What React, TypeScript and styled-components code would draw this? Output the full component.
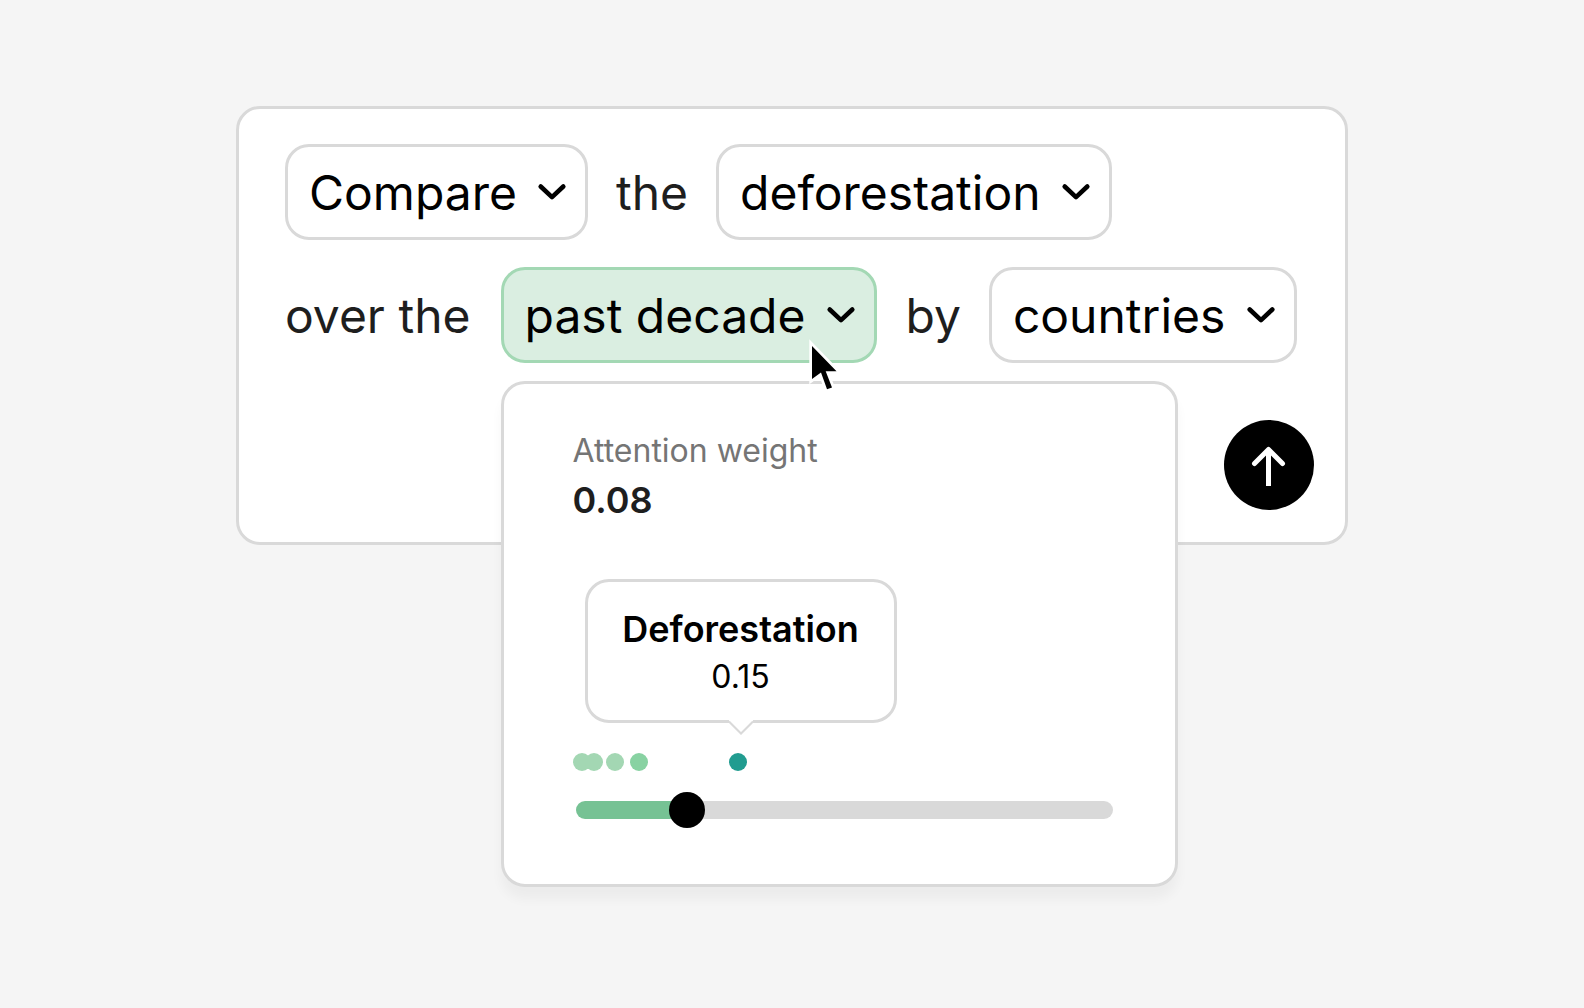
import React, { useId, useState } from 'react';
import styled, { createGlobalStyle, css } from 'styled-components';

const colors = {
  page: '#f5f5f5',
  surface: '#ffffff',
  line: '#d9d9d9',
  ink: '#000000',
  text: '#1e1e1e',
  muted: '#757575',
  highlight: '#daeee1',
  highlightLine: '#a3d8b4',
  fill: '#76c294',
};

const GlobalStyle = createGlobalStyle`
  * { box-sizing: border-box; }
  body {
    margin: 0;
    background: ${colors.page};
    color: ${colors.text};
    font-family: Inter, "Liberation Sans", sans-serif;
  }
`;

const Page = styled.main`
  min-height: 100vh;
  padding: 106px 24px;
  display: flex;
  justify-content: center;
  align-items: flex-start;
`;

const PromptCard = styled.form`
  width: 100%;
  max-width: 1112px;
  padding: 35px 31px 32px 46px;
  border: 3px solid ${colors.line};
  border-radius: 24px;
  background: ${colors.surface};
  display: flex;
  flex-direction: column;
`;

const Sentence = styled.div`
  display: flex;
  flex-direction: column;
  gap: 27px;
  font-size: 48px;
  line-height: 60px;
`;

const Line = styled.div`
  display: flex;
  align-items: center;
  gap: 28px;
  white-space: nowrap;
`;

const LeadLine = styled(Line)`
  gap: 30px;
`;

const Words = styled.span`
  padding-top: 2px;
`;

const Actions = styled.div`
  display: flex;
  justify-content: flex-end;
  margin-top: 57px;
`;

const chip = css`
  height: 96px;
  border: 3px solid ${colors.line};
  border-radius: 24px;
  background: ${colors.surface};
  color: ${colors.ink};
  font: inherit;
  cursor: pointer;
`;

const SelectBox = styled.label`
  ${chip}
  display: grid;
  grid-template-columns: auto;
  align-items: center;

  > * { grid-area: 1 / 1; }
  > svg {
    justify-self: end;
    margin-right: 15px;
    pointer-events: none;
  }
`;

const Select = styled.select`
  appearance: none;
  height: 90px;
  margin: 0;
  padding: 2px 68px 0 21px;
  border: 0;
  border-radius: 21px;
  background: transparent;
  color: inherit;
  font: inherit;
  cursor: pointer;
`;

const PopoverAnchor = styled.div`
  position: relative;
`;

const PopoverButton = styled.button`
  ${chip}
  display: flex;
  align-items: center;
  gap: 18px;
  padding: 0 15px 0 21px;
  border-color: ${colors.highlightLine};
  background: ${colors.highlight};
`;

const SubmitButton = styled.button`
  width: 90px;
  height: 90px;
  padding: 0;
  border: 0;
  border-radius: 50%;
  background: ${colors.ink};
  display: grid;
  place-items: center;
  cursor: pointer;
`;

const Pointer = styled.svg`
  position: absolute;
  z-index: 2;
  left: 307px;
  top: 69px;
  pointer-events: none;
`;

const Popover = styled.section`
  position: absolute;
  z-index: 1;
  top: calc(100% + 18px);
  left: 0;
  width: 677px;
  padding: 43px 60px 56px 69px;
  border: 3px solid ${colors.line};
  border-radius: 24px;
  background: ${colors.surface};
  box-shadow: 0 12px 12px rgba(0, 0, 0, 0.04);
  color: ${colors.text};
`;

const WeightLabel = styled.label`
  display: block;
  font-size: 32px;
  line-height: 48px;
  color: ${colors.muted};
`;

const WeightValue = styled.output`
  display: block;
  font-size: 36px;
  line-height: 50px;
  font-weight: 600;
`;

const Plot = styled.div`
  position: relative;
  height: 18px;
  margin: 228px 0 21px;
`;

const Dot = styled.span<{ $color: string }>`
  position: absolute;
  top: 0;
  width: 18px;
  height: 18px;
  border-radius: 50%;
  background: ${(p) => p.$color};
`;

const Tooltip = styled.div`
  position: absolute;
  left: 12px;
  bottom: 48px;
  width: 312px;
  height: 144px;
  border: 3px solid ${colors.line};
  border-radius: 24px;
  background: ${colors.surface};
  color: ${colors.ink};
  text-align: center;
  padding-top: 23px;

  > svg {
    position: absolute;
    left: 141px;
    top: 138px;
  }
`;

const TooltipName = styled.div`
  font-size: 36px;
  line-height: 48px;
  font-weight: 600;
`;

const TooltipValue = styled.div`
  font-size: 32px;
  line-height: 48px;
`;

const Slider = styled.input`
  appearance: none;
  display: block;
  width: calc(100% - 5px);
  height: 36px;
  margin: 0 2px 0 3px;
  background: transparent;
  cursor: pointer;

  &::-webkit-slider-runnable-track {
    height: 18px;
    border-radius: 9px;
    background: linear-gradient(
      to right,
      ${colors.fill} var(--filled),
      ${colors.line} var(--filled)
    );
  }
  &::-webkit-slider-thumb {
    appearance: none;
    width: 36px;
    height: 36px;
    margin-top: -9px;
    border-radius: 50%;
    background: ${colors.ink};
  }
`;

const MAX_WEIGHT = 0.431;

const points = [
  { at: 0, color: '#a3d7b3' },
  { at: 12, color: '#a3d7b3' },
  { at: 33, color: '#a3d7b3' },
  { at: 57, color: '#88d2a2' },
  { at: 156, color: '#219c90' },
];

function Chevron() {
  return (
    <svg width="36" height="36" viewBox="0 0 36 36" fill="none" aria-hidden="true">
      <path d="M6.7 12.5 18 23.1 29.3 12.5" stroke="#000" strokeWidth="4.6" strokeLinecap="round" strokeLinejoin="round" />
    </svg>
  );
}

function Choice({ name, value }: { name: string; value: string }) {
  return (
    <SelectBox>
      <Select aria-label={name} defaultValue={value}>
        <option>{value}</option>
      </Select>
      <Chevron />
    </SelectBox>
  );
}

function WeightPopover() {
  const id = useId();
  const [weight, setWeight] = useState(0.08);
  const ratio = weight / MAX_WEIGHT;
  const filled = `calc(18px + (100% - 36px) * ${ratio})`;

  return (
    <Popover>
      <WeightLabel htmlFor={id}>Attention weight</WeightLabel>
      <WeightValue htmlFor={id}>{weight.toFixed(2)}</WeightValue>
      <Plot>
        {points.map((p) => (
          <Dot key={p.at} $color={p.color} style={{ left: p.at }} />
        ))}
        <Tooltip role="tooltip">
          <TooltipName>Deforestation</TooltipName>
          <TooltipValue>0.15</TooltipValue>
          <svg width="24" height="15" viewBox="0 0 24 15" aria-hidden="true">
            <path d="M0 0H24V2L12 14 0 2Z" fill="#fff" />
            <path d="M0 1.5 12 13.5 24 1.5" fill="none" stroke="#d9d9d9" strokeWidth="2" />
          </svg>
        </Tooltip>
      </Plot>
      <Slider
        id={id}
        type="range"
        min={0}
        max={MAX_WEIGHT}
        step={0.001}
        value={weight}
        onChange={(e) => setWeight(Number(e.target.value))}
        style={{ '--filled': filled } as React.CSSProperties}
      />
    </Popover>
  );
}

export default function App() {
  const [open, setOpen] = useState(true);

  return (
    <>
      <GlobalStyle />
      <Page>
        <PromptCard onSubmit={(e) => e.preventDefault()}>
          <Sentence>
            <Line>
              <Choice name="Action" value="Compare" />
              <Words>the</Words>
              <Choice name="Topic" value="deforestation" />
            </Line>
            <LeadLine>
              <Words>over the</Words>
              <Line>
                <PopoverAnchor>
                  <PopoverButton type="button" aria-expanded={open} onClick={() => setOpen(!open)}>
                    <Words>past decade</Words>
                    <Chevron />
                  </PopoverButton>
                  {open && <WeightPopover />}
                  <Pointer width="34" height="58" viewBox="0 0 34 58" aria-hidden="true">
                    <path
                      d="M4 10V43L13 36.5 19 53.3 24 51.4 17.7 35.2H28.5Z"
                      fill="#000"
                      stroke="#fff"
                      strokeWidth="5.4"
                      paintOrder="stroke"
                    />
                  </Pointer>
                </PopoverAnchor>
                <Words>by</Words>
                <Choice name="Group by" value="countries" />
              </Line>
            </LeadLine>
          </Sentence>
          <Actions>
            <SubmitButton type="submit" aria-label="Send">
              <svg width="48" height="48" viewBox="0 0 48 48" fill="none" aria-hidden="true">
                <path d="M9.5 22.5 23.5 8.5 37.5 22.5" stroke="#fff" strokeWidth="5" strokeLinecap="round" strokeLinejoin="round" />
                <path d="M23.5 8.5V45" stroke="#fff" strokeWidth="5" />
              </svg>
            </SubmitButton>
          </Actions>
        </PromptCard>
      </Page>
    </>
  );
}
